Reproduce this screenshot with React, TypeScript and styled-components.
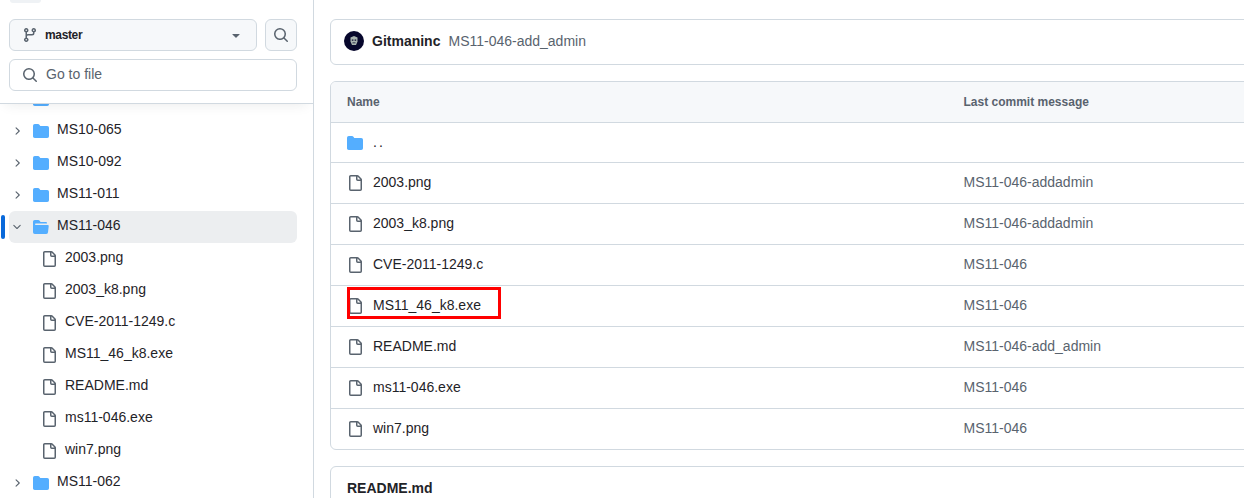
import styled, { createGlobalStyle } from "styled-components";

const FILE_PATH =
  "M2 1.75C2 .784 2.784 0 3.75 0h6.586c.464 0 .909.184 1.237.513l2.914 2.914c.329.328.513.773.513 1.237v9.586A1.75 1.75 0 0 1 13.25 16h-9.5A1.75 1.75 0 0 1 2 14.25Zm1.75-.25a.25.25 0 0 0-.25.25v12.5c0 .138.112.25.25.25h9.5a.25.25 0 0 0 .25-.25V6h-2.75A1.75 1.75 0 0 1 9 4.25V1.5Zm6.75.062V4.25c0 .138.112.25.25.25h2.688l-.011-.013-2.914-2.914-.013-.011Z";
const FOLDER_PATH =
  "M1.75 1A1.75 1.75 0 0 0 0 2.75v10.5C0 14.216.784 15 1.75 15h12.5A1.75 1.75 0 0 0 16 13.25v-8.5A1.75 1.75 0 0 0 14.25 3H7.5a.25.25 0 0 1-.2-.1l-.9-1.2C6.07 1.26 5.55 1 5 1H1.75Z";
const FOLDER_OPEN_PATH =
  "M.513 1.513A1.75 1.75 0 0 1 1.75 1h3.5c.55 0 1.07.26 1.4.7l.9 1.2a.25.25 0 0 0 .2.1H13a1 1 0 0 1 1 1v.5H2.75a.75.75 0 0 0 0 1.5h11.978a1 1 0 0 1 .994 1.117L15 13.25A1.75 1.75 0 0 1 13.25 15H1.75A1.75 1.75 0 0 1 0 13.25V2.75c0-.464.184-.91.513-1.237Z";
const BRANCH_PATH =
  "M9.5 3.25a2.25 2.25 0 1 1 3 2.122V6A2.5 2.5 0 0 1 10 8.5H6a1 1 0 0 0-1 1v1.128a2.251 2.251 0 1 1-1.5 0V5.372a2.25 2.25 0 1 1 1.5 0v1.836A2.493 2.493 0 0 1 6 7h4a1 1 0 0 0 1-1v-.628A2.25 2.25 0 0 1 9.5 3.25Zm-6 0a.75.75 0 1 0 1.5 0 .75.75 0 0 0-1.5 0Zm8.25-.75a.75.75 0 1 0 0 1.5.75.75 0 0 0 0-1.5ZM4.25 12a.75.75 0 1 0 0 1.5.75.75 0 0 0 0-1.5Z";
const SEARCH_PATH =
  "M10.68 11.74a6 6 0 0 1-7.922-8.982 6 6 0 0 1 8.982 7.922l3.04 3.04a.749.749 0 0 1-.326 1.275.749.749 0 0 1-.734-.215ZM11.5 7a4.499 4.499 0 1 0-8.997 0A4.499 4.499 0 0 0 11.5 7Z";
const CHEVRON_RIGHT_PATH =
  "M6.22 3.22a.75.75 0 0 1 1.06 0l4.25 4.25a.75.75 0 0 1 0 1.06l-4.25 4.25a.751.751 0 0 1-1.042-.018.751.751 0 0 1-.018-1.042L9.94 8 6.22 4.28a.75.75 0 0 1 0-1.06Z";
const CHEVRON_DOWN_PATH =
  "M12.78 5.22a.749.749 0 0 1 0 1.06l-4.25 4.25a.749.749 0 0 1-1.06 0L3.22 6.28a.749.749 0 0 1 .018-1.042.749.749 0 0 1 1.042-.018L8 8.939l3.72-3.719a.749.749 0 0 1 1.06 0Z";
const CARET_PATH =
  "m4.427 7.427 3.396 3.396a.25.25 0 0 0 .354 0l3.396-3.396A.25.25 0 0 0 11.396 7H4.604a.25.25 0 0 0-.177.427Z";

const GlobalStyle = createGlobalStyle`
  html, body {
    margin: 0;
    height: 100%;
    overflow: hidden;
    background: #fff;
  }
  body {
    font-family: "Liberation Sans", Arial, sans-serif;
    font-size: 14px;
    color: #1f2328;
  }
`;

const Page = styled.div`
  display: flex;
  width: 1244px;
  height: 498px;
  overflow: hidden;
`;

const Sidebar = styled.aside`
  width: 313px;
  flex: none;
  border-right: 1px solid #d1d9e0;
  display: flex;
  flex-direction: column;
  overflow: hidden;
`;

const SideHeader = styled.div`
  position: relative;
  z-index: 2;
  height: 104px;
  box-sizing: border-box;
  padding: 0 16px 0 9px;
  background: #fff;
  border-bottom: 1px solid #d1d9e0;
  box-shadow: 0 6px 12px -6px rgba(31, 35, 40, 0.1);
  flex: none;
`;

const TopTab = styled.div`
  width: 31px;
  height: 3px;
  margin-left: 1px;
  margin-bottom: 16px;
  background: #eff2f5;
  border-radius: 0 0 6px 6px;
`;

const BranchRow = styled.div`
  display: flex;
  gap: 8px;
  margin-bottom: 8px;
`;

const BranchButton = styled.div`
  flex: 1;
  height: 32px;
  box-sizing: border-box;
  display: flex;
  align-items: center;
  padding: 0 12px;
  gap: 7px;
  background: #f6f8fa;
  border: 1px solid #d1d9e0;
  border-radius: 6px;
  color: #59636e;
`;

const BranchName = styled.span`
  flex: 1;
  font-size: 12px;
  font-weight: 700;
  color: #1f2328;
  letter-spacing: -0.35px;
`;

const SearchButton = styled.div`
  width: 32px;
  height: 32px;
  box-sizing: border-box;
  display: flex;
  align-items: center;
  justify-content: center;
  background: #f6f8fa;
  border: 1px solid #d1d9e0;
  border-radius: 6px;
  color: #59636e;
`;

const FileInput = styled.div`
  height: 32px;
  box-sizing: border-box;
  display: flex;
  align-items: center;
  gap: 8px;
  padding: 0 12px;
  border: 1px solid #d1d9e0;
  border-radius: 6px;
  color: #59636e;
`;

const InputHint = styled.span`
  transform: translateY(-1px);
`;

const Tree = styled.div`
  margin-top: -21px;
  padding: 0 16px 0 9px;
`;

const TreeRow = styled.div<{ $active?: boolean; $file?: boolean }>`
  position: relative;
  height: 32px;
  display: flex;
  align-items: center;
  gap: 8px;
  padding-left: ${(p) => (p.$file ? "32px" : "0")};
  border-radius: 6px;
  background: ${(p) => (p.$active ? "#eceef0" : "transparent")};
`;

const ActiveBar = styled.span`
  position: absolute;
  left: -8px;
  top: 4px;
  width: 4px;
  height: 24px;
  border-radius: 6px;
  background: #0969da;
`;

const ChevronSlot = styled.span`
  width: 16px;
  height: 16px;
  flex: none;
  color: #59636e;
  display: flex;
  align-items: center;
  justify-content: center;
`;

const RowLabel = styled.span`
  line-height: 20px;
  transform: translateY(-2px);
`;

const Main = styled.main`
  flex: none;
  width: 1000px;
  padding: 19px 0 0 16px;
`;

const CommitBox = styled.div`
  height: 46px;
  box-sizing: border-box;
  display: flex;
  align-items: center;
  padding: 0 0 2px 13px;
  gap: 8px;
  border: 1px solid #d1d9e0;
  border-radius: 6px;
  margin-bottom: 16px;
`;

const Avatar = styled.svg`
  flex: none;
`;

const CommitAuthor = styled.span`
  font-weight: 700;
`;

const CommitTitle = styled.span`
  color: #59636e;
`;

const FileTable = styled.div`
  border: 1px solid #d1d9e0;
  border-radius: 6px;
  overflow: hidden;
  margin-bottom: 16px;
`;

const HeaderRow = styled.div`
  display: grid;
  grid-template-columns: 616.5px 1fr;
  align-items: center;
  height: 41px;
  box-sizing: border-box;
  padding-left: 16px;
  background: #f6f8fa;
  border-bottom: 1px solid #d1d9e0;
  font-size: 12px;
  font-weight: 700;
  color: #59636e;
`;

const FileRow = styled.div<{ $short?: boolean }>`
  position: relative;
  display: grid;
  grid-template-columns: 616.5px 1fr;
  align-items: center;
  height: ${(p) => (p.$short ? "40px" : "41px")};
  box-sizing: border-box;
  padding-left: 16px;
  border-bottom: 1px solid #d1d9e0;

  &:last-child {
    border-bottom: 0;
    height: 40px;
  }
`;

const NameCell = styled.div`
  display: flex;
  align-items: center;
  gap: 10px;
`;

const CellText = styled.span`
  transform: translateY(-1px);
`;

const CommitCell = styled.div`
  color: #59636e;
  transform: translateY(-1px);
`;

const DotDot = styled.span`
  letter-spacing: 2px;
  color: #1f2328;
  transform: translateY(-1px);
`;

const Highlight = styled.div`
  position: absolute;
  left: 16px;
  top: 1px;
  width: 154px;
  height: 32px;
  box-sizing: border-box;
  border: 3px solid #f00;
  pointer-events: none;
`;

const ReadmeBox = styled.div`
  height: 60px;
  box-sizing: border-box;
  padding: 12px 16px;
  border: 1px solid #d1d9e0;
  border-radius: 6px;
  font-weight: 700;
  line-height: 18px;
`;

function Icon({ d, color, size = 16 }: { d: string; color: string; size?: number }) {
  return (
    <svg width={size} height={size} viewBox="0 0 16 16" fill={color} style={{ flex: "none" }}>
      <path d={d} />
    </svg>
  );
}

const FOLDER_BLUE = "#54aeff";
const FILE_GREY = "#59636e";

function FolderRow({ name, open }: { name: string; open?: boolean }) {
  return (
    <TreeRow $active={open}>
      {open && <ActiveBar />}
      <ChevronSlot>
        <Icon d={open ? CHEVRON_DOWN_PATH : CHEVRON_RIGHT_PATH} color="currentColor" size={12} />
      </ChevronSlot>
      <Icon d={open ? FOLDER_OPEN_PATH : FOLDER_PATH} color={FOLDER_BLUE} />
      <RowLabel>{name}</RowLabel>
    </TreeRow>
  );
}

const treeFiles = ["2003.png", "2003_k8.png", "CVE-2011-1249.c", "MS11_46_k8.exe", "README.md", "ms11-046.exe", "win7.png"];

const tableFiles = [
  { name: "2003.png", commit: "MS11-046-addadmin" },
  { name: "2003_k8.png", commit: "MS11-046-addadmin" },
  { name: "CVE-2011-1249.c", commit: "MS11-046" },
  { name: "MS11_46_k8.exe", commit: "MS11-046", marked: true },
  { name: "README.md", commit: "MS11-046-add_admin" },
  { name: "ms11-046.exe", commit: "MS11-046" },
  { name: "win7.png", commit: "MS11-046" },
];

export default function App() {
  return (
    <Page>
      <GlobalStyle />
      <Sidebar>
        <SideHeader>
          <TopTab />
          <BranchRow>
            <BranchButton>
              <Icon d={BRANCH_PATH} color="#59636e" />
              <BranchName>master</BranchName>
              <Icon d={CARET_PATH} color="#59636e" />
            </BranchButton>
            <SearchButton>
              <Icon d={SEARCH_PATH} color="#59636e" />
            </SearchButton>
          </BranchRow>
          <FileInput>
            <Icon d={SEARCH_PATH} color="#59636e" />
            <InputHint>Go to file</InputHint>
          </FileInput>
        </SideHeader>
        <Tree>
          <FolderRow name="" />
          <FolderRow name="MS10-065" />
          <FolderRow name="MS10-092" />
          <FolderRow name="MS11-011" />
          <FolderRow name="MS11-046" open />
          {treeFiles.map((f) => (
            <TreeRow $file key={f}>
              <Icon d={FILE_PATH} color={FILE_GREY} />
              <RowLabel>{f}</RowLabel>
            </TreeRow>
          ))}
          <FolderRow name="MS11-062" />
        </Tree>
      </Sidebar>
      <Main>
        <CommitBox>
          <Avatar width="20" height="20" viewBox="0 0 20 20">
            <circle cx="10" cy="10" r="10" fill="#07072c" />
            <path d="M6.5 6.5 10 5l3.5 1.5v4L12 14H8l-1.5-3.5Z" fill="#a9b4b0" />
            <path d="M7.8 8.5h1.6v1.2H7.8Zm2.8 0h1.6v1.2h-1.6ZM8.5 11.5h3v.8h-3Z" fill="#07072c" />
          </Avatar>
          <CommitAuthor>Gitmaninc</CommitAuthor>
          <CommitTitle>MS11-046-add_admin</CommitTitle>
        </CommitBox>
        <FileTable>
          <HeaderRow>
            <span>Name</span>
            <span>Last commit message</span>
          </HeaderRow>
          <FileRow $short>
            <NameCell>
              <Icon d={FOLDER_PATH} color={FOLDER_BLUE} />
              <DotDot>..</DotDot>
            </NameCell>
          </FileRow>
          {tableFiles.map((f) => (
            <FileRow key={f.name}>
              <NameCell>
                <Icon d={FILE_PATH} color={FILE_GREY} />
                <CellText>{f.name}</CellText>
              </NameCell>
              <CommitCell>{f.commit}</CommitCell>
              {f.marked && <Highlight />}
            </FileRow>
          ))}
        </FileTable>
        <ReadmeBox>README.md</ReadmeBox>
      </Main>
    </Page>
  );
}
